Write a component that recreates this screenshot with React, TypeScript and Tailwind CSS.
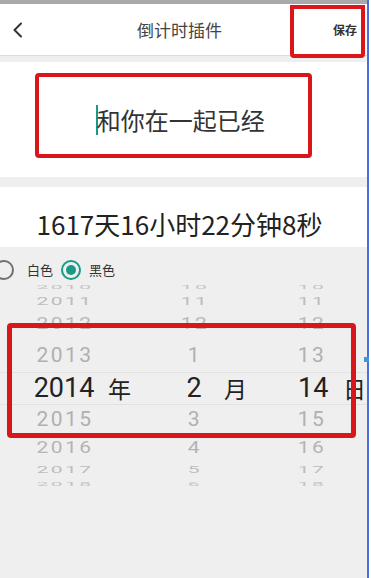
const cjk = "font-['Noto_Sans_CJK_SC','Noto_Sans',sans-serif]";
const num = "font-['Roboto','Noto_Sans_CJK_SC',sans-serif]";

type Row = { y: string; m: string; d: string; h: string; scale: number; color: string };

const above: Row[] = [
  { y: "2010", m: "10", d: "10", h: "h-[15px]", scale: 0.22, color: "text-[#c4c4c4]" },
  { y: "2011", m: "11", d: "11", h: "h-[12px]", scale: 0.5, color: "text-[#bdbdbd]" },
  { y: "2012", m: "12", d: "12", h: "h-[32px]", scale: 0.8, color: "text-[#b8b8b8]" },
  { y: "2013", m: "1", d: "13", h: "h-[33px]", scale: 1, color: "text-[#b0b0b0]" },
];

const below: Row[] = [
  { y: "2015", m: "3", d: "15", h: "h-[28px]", scale: 0.95, color: "text-[#b0b0b0]" },
  { y: "2016", m: "4", d: "16", h: "h-[28px]", scale: 0.78, color: "text-[#b4b4b4]" },
  { y: "2017", m: "5", d: "17", h: "h-[18px]", scale: 0.45, color: "text-[#bdbdbd]" },
  { y: "2018", m: "6", d: "18", h: "h-[10px]", scale: 0.22, color: "text-[#c4c4c4]" },
];

function PickerRow({ row }: { row: Row }) {
  return (
    <div className={`flex items-center overflow-hidden ${row.h} ${row.color} ${num} text-[21px] tracking-[2.5px]`}>
      {[row.y, row.m, row.d].map((v, i) => (
        <div
          key={i}
          className={`${i === 2 ? "w-[104px]" : "w-[130px]"} text-center leading-none`}
          style={{ transform: `scaleY(${row.scale})` }}
        >
          {v}
        </div>
      ))}
    </div>
  );
}

export default function App() {
  return (
    <div className="flex h-[578px] w-[371px] overflow-hidden bg-white">
      <div className="relative flex w-[367px] shrink-0 flex-col bg-[#efefef]">
        <div className="h-[4px] bg-[#a9a9a9]" />

        {/* header */}
        <div className="relative flex h-[52px] items-center border-b border-[#dcdcdc] bg-white">
          <svg className="ml-[12px] h-[16px] w-[12px]" viewBox="0 0 12 16" fill="none">
            <polyline points="9,1.5 2.5,8 9,14.5" stroke="#333" strokeWidth="2" strokeLinecap="round" strokeLinejoin="round" />
          </svg>
          <div className={`flex-1 text-center text-[17px] text-[#444] ${cjk} pl-[2px]`}>倒计时插件</div>
          <div className={`pr-[10px] text-[12px] font-bold text-[#333] ${cjk}`}>保存</div>
          <div className="absolute right-[2px] top-[1px] h-[53px] w-[75px] rounded-b-[4px] border-[4px] border-[#d8161c]" />
        </div>

        <div className="h-[6px]" />

        {/* title input */}
        <div className="relative flex h-[115px] items-center justify-center bg-white">
          <div className={`flex items-center pr-[6px] text-[24px] text-[#333] ${cjk}`}>
            <span className="mr-[-1px] h-[30px] w-[1.5px] bg-[#1a9985]" />
            和你在一起已经
          </div>
          <div className="absolute left-[35px] top-[11px] h-[85px] w-[277px] rounded-[4px] border-[4px] border-[#d8161c]" />
        </div>

        <div className="h-[10px]" />

        {/* countdown */}
        <div className={`flex h-[60px] items-center justify-center bg-white pt-[12px] pr-[8px] text-[26px] text-[#222] ${cjk}`}>
          1617天16小时22分钟8秒
        </div>

        {/* radio */}
        <div className={`mt-[13px] flex h-[20px] items-center text-[13px] text-[#333] ${cjk}`}>
          <span className="ml-[-6px] h-[20px] w-[20px] rounded-full border-2 border-[#707070]" />
          <span className="ml-[13px]">白色</span>
          <span className="ml-[8px] flex h-[20px] w-[20px] items-center justify-center rounded-full border-2 border-[#1a9985]">
            <span className="h-[10px] w-[10px] rounded-full bg-[#1a9985]" />
          </span>
          <span className="ml-[8px]">黑色</span>
        </div>

        {/* date picker */}
        <div className="relative flex flex-col">
          {above.map((r) => (
            <PickerRow key={r.y} row={r} />
          ))}
          <div className={`flex h-[33px] items-center border-y border-[#e2e2e2] text-[#222] ${num}`}>
            <span className="ml-[33px] w-[62px] text-center text-[27px] leading-none">2014</span>
            <span className={`ml-[13px] text-[23px] leading-none ${cjk}`}>年</span>
            <span className="ml-[53px] w-[20px] text-center text-[27px] leading-none">2</span>
            <span className={`ml-[20px] text-[23px] leading-none ${cjk}`}>月</span>
            <span className="ml-[51px] w-[29px] text-center text-[27px] leading-none">14</span>
            <span className={`ml-[16px] text-[23px] leading-none ${cjk}`}>日</span>
          </div>
          {below.map((r) => (
            <PickerRow key={r.y} row={r} />
          ))}
          <div className="absolute left-[7px] top-[43px] h-[115px] w-[349px] rounded-[4px] border-[5px] border-[#d8161c]" />
        </div>

        <div className="absolute left-[364px] top-[357px] h-[5px] w-[5px] bg-[#3a9ad9]" />
      </div>
      <div className="w-[2px] shrink-0 bg-[#4a6ee0]" />
    </div>
  );
}
